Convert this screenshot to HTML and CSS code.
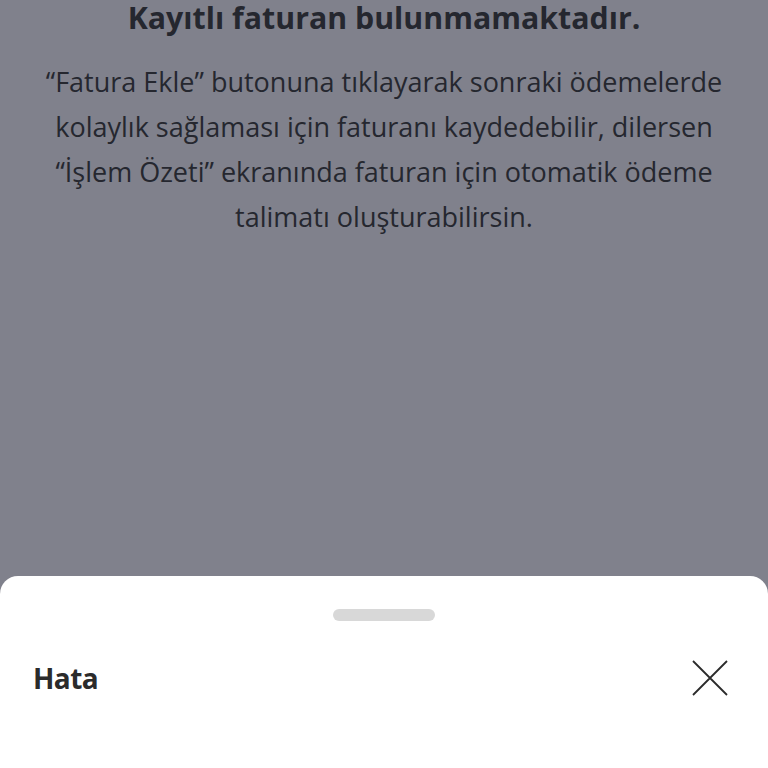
FILE: index.html
```html
<!DOCTYPE html>
<html lang="tr">
<head>
    <meta charset="UTF-8">
    <meta name="viewport" content="width=device-width, initial-scale=1.0">
    <title>Faturalar</title>
    <link rel="stylesheet" href="styles.css">
</head>
<body>

    <div class="empty-state">
        <h2 class="empty-title">Kayıtlı faturan bulunmamaktadır.</h2>
        <p class="empty-text">“Fatura Ekle” butonuna tıklayarak sonraki ödemelerde kolaylık sağlaması için faturanı kaydedebilir, dilersen “İşlem Özeti” ekranında faturan için otomatik ödeme talimatı oluşturabilirsin.</p>
    </div>

    <div class="sheet">
        <div class="sheet-handle"></div>
        <div class="sheet-head">
            <span class="sheet-title">Hata</span>
            <button class="close-btn" aria-label="Kapat">
                <svg width="36" height="36" viewBox="0 0 36 36"><path d="M1 1 L35 35 M35 1 L1 35" stroke="#2b2b2b" stroke-width="1.8" fill="none"/></svg>
            </button>
        </div>
    </div>

</body>
</html>
```

FILE: styles.css
```css
body, html { margin: 0; padding: 0; height: 100%; overflow: hidden; background: #80818c; font-family: 'Open Sans', Arial, sans-serif; }
body { display: flex; flex-direction: column; }
.empty-state { flex: 1; text-align: center; padding: 0 30px; color: #25272f; }
.empty-title { margin: 0; font-size: 30.3px; line-height: 36px; font-weight: 700; }
.empty-text { margin: 23px 0 0; font-size: 27px; line-height: 45px; }
.sheet { background: #fff; border-radius: 18px 18px 0 0; height: 192px; display: flex; flex-direction: column; align-items: center; }
.sheet-handle { width: 102px; height: 12px; border-radius: 6px; background: #d8d8d8; margin-top: 33px; }
.sheet-head { align-self: stretch; display: flex; justify-content: space-between; align-items: center; padding: 0 40px 0 33px; margin-top: 38px; }
.sheet-title { font-size: 28px; font-weight: 700; letter-spacing: -0.6px; color: #2b2b2b; }
.close-btn { background: none; border: none; padding: 0; width: 36px; height: 36px; cursor: pointer; }
.close-btn svg { display: block; }
```
